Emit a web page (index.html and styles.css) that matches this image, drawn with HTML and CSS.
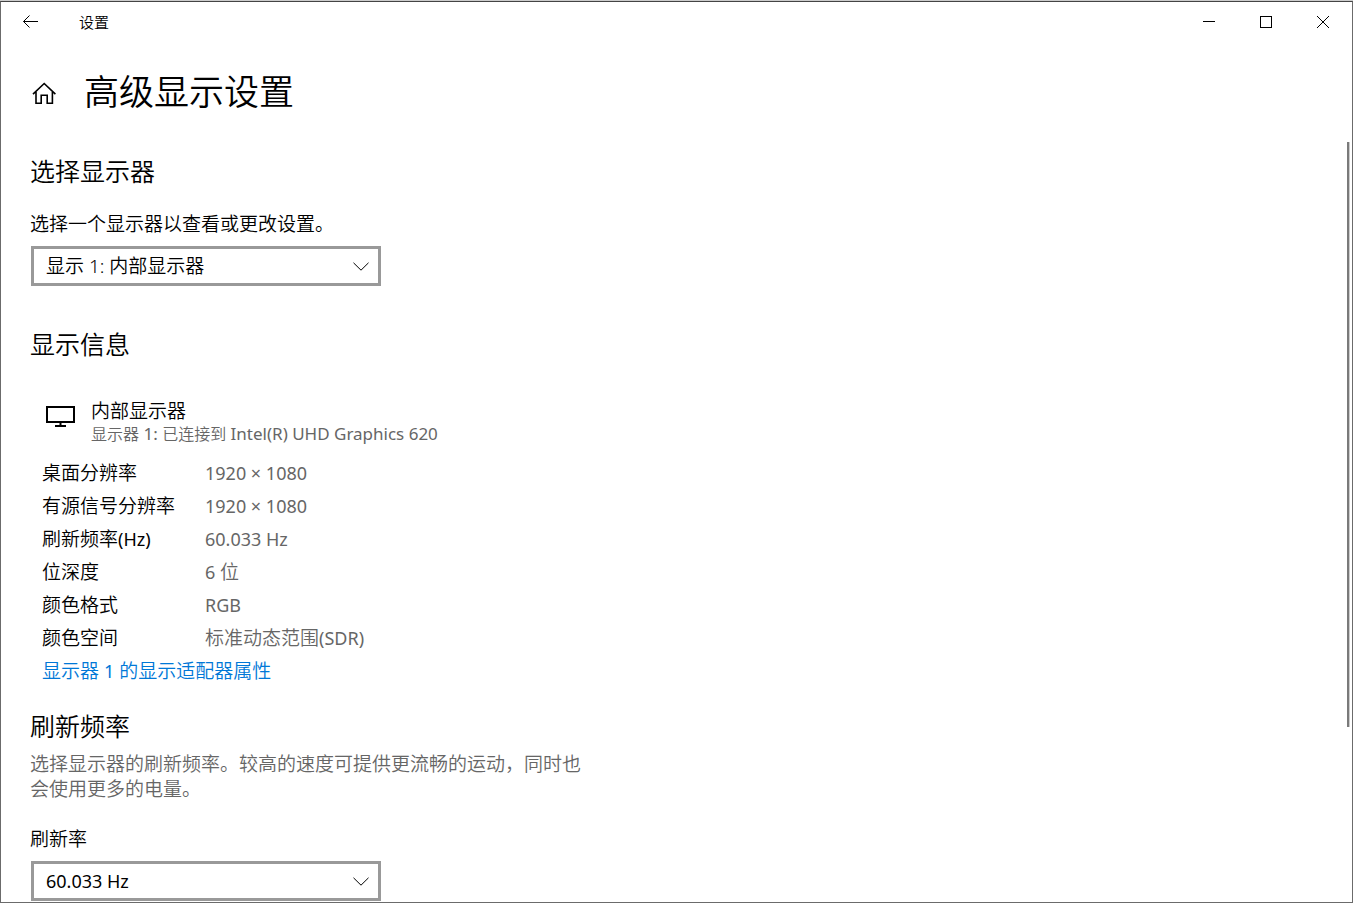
FILE: index.html
```html
<!DOCTYPE html>
<html lang="zh-CN">
<head>
    <meta charset="UTF-8">
    <meta name="viewport" content="width=device-width, initial-scale=1.0">
    <title>设置</title>
    <link rel="stylesheet" href="styles.css">
</head>
<body>
    <div class="window">
        <div class="titlebar">
            <button type="button" class="back" aria-label="返回">
                <svg width="16" height="14" viewBox="0 0 16 14"><path d="M16 6.5H1.5M7.5 .5l-6 6 6 6"/></svg>
            </button>
            <span class="app-name">设置</span>
            <div class="win-btns">
                <button type="button" aria-label="最小化">
                    <svg width="12" height="12" viewBox="0 0 12 12" shape-rendering="crispEdges"><path d="M0 5.5h12"/></svg>
                </button>
                <button type="button" aria-label="最大化">
                    <svg width="12" height="12" viewBox="0 0 12 12" shape-rendering="crispEdges"><path d="M.5 .5h11v11H.5z"/></svg>
                </button>
                <button type="button" aria-label="关闭">
                    <svg width="12" height="12" viewBox="0 0 12 12"><path d="M0 0l12 12M12 0L0 12"/></svg>
                </button>
            </div>
        </div>

        <header class="header">
            <a href="#" class="home" aria-label="主页">
                <svg width="24" height="22" viewBox="0 0 24 22"><path d="M1 12.2L12.2 1.5 23.4 12.2M4 10v11.2h5.2v-8h6v8h5.2V10"/></svg>
            </a>
            <h1>高级显示设置</h1>
        </header>

        <main class="content">
            <section>
                <h2>选择显示器</h2>
                <label for="display" class="label">选择一个显示器以查看或更改设置。</label>
                <div class="select">
                    <select id="display">
                        <option>显示 1: 内部显示器</option>
                    </select>
                    <svg width="16" height="9" viewBox="0 0 16 9"><path d="M.5 .8L8 8.2 15.5 .8"/></svg>
                </div>
            </section>

            <section class="info">
                <h2>显示信息</h2>
                <div class="monitor">
                    <svg width="29" height="22" viewBox="0 0 29 22"><path d="M1 1h27v15H1zM14.5 16v4M9 20h11"/></svg>
                    <div>
                        <p class="monitor-name">内部显示器</p>
                        <p class="monitor-desc"><span class="cjk">显示器</span> 1: <span class="cjk">已连接到</span> Intel(R) UHD Graphics 620</p>
                    </div>
                </div>
                <table class="props">
                    <tr><th scope="row">桌面分辨率</th><td>1920 × 1080</td></tr>
                    <tr><th scope="row">有源信号分辨率</th><td>1920 × 1080</td></tr>
                    <tr><th scope="row">刷新频率<span class="latin">(Hz)</span></th><td>60.033 Hz</td></tr>
                    <tr><th scope="row">位深度</th><td>6 <span class="cjk">位</span></td></tr>
                    <tr><th scope="row">颜色格式</th><td>RGB</td></tr>
                    <tr><th scope="row">颜色空间</th><td><span class="cjk">标准动态范围</span>(SDR)</td></tr>
                </table>
                <a href="#" class="link">显示器 <span class="latin">1</span> 的显示适配器属性</a>
            </section>

            <section class="refresh">
                <h2>刷新频率</h2>
                <p class="desc">选择显示器的刷新频率。较高的速度可提供更流畅的运动，同时也会使用更多的电量。</p>
                <label for="rate" class="label">刷新率</label>
                <div class="select">
                    <select id="rate" class="latin">
                        <option>60.033 Hz</option>
                    </select>
                    <svg width="16" height="9" viewBox="0 0 16 9"><path d="M.5 .8L8 8.2 15.5 .8"/></svg>
                </div>
            </section>
            <div class="scroll-thumb"></div>
        </main>
    </div>
</body>
</html>
```

FILE: styles.css
```css
*{
    margin: 0;
    padding: 0;
    box-sizing: border-box;
}
body{
    padding-top: 1px;
    font-family: "Noto Sans", "Noto Sans CJK SC", sans-serif;
    font-size: 19px;
    font-weight: 350;
    line-height: 24px;
    color: #000;
    background-color: #ccc;
    overflow: hidden;
}
h1,h2,th{
    font-weight: inherit;
}
svg{
    display: block;
    flex: none;
    fill: none;
    stroke: #000;
}
button{
    display: flex;
    align-items: center;
    justify-content: center;
    border: 0;
    background: none;
}
.window{
    display: flex;
    flex-direction: column;
    height: calc(100vh - 1px);
    border: 1px solid #6b6b6b;
    border-top-color: #444;
    background-color: #fff;
    overflow: hidden;
}
.titlebar{
    display: flex;
    flex: none;
    align-items: center;
    height: 40px;
}
.back{
    width: 58px;
    height: 40px;
}
.app-name{
    margin-left: 20px;
    font-size: 15px;
}
.win-btns{
    display: flex;
    margin-left: auto;
    padding-right: 1px;
}
.win-btns button{
    width: 57px;
    height: 40px;
}
.header{
    display: flex;
    flex: none;
    align-items: center;
    gap: 28px;
    height: 100px;
    padding-left: 31px;
}
.home{
    padding-top: 2px;
}
.home svg{
    stroke-width: 1.6;
}
h1{
    font-size: 35px;
    line-height: 48px;
}
h2{
    font-size: 25px;
    line-height: 32px;
}
.content{
    position: relative;
    flex: 1;
    min-height: 0;
    padding: 13px 30px 0 29px;
}
.label{
    display: block;
    margin: 25px 0 10px;
}
.select{
    position: relative;
    max-width: 350px;
    margin-left: 1px;
}
.select select{
    display: block;
    width: 100%;
    height: 40px;
    padding: 0 40px 0 12px;
    border: 3px solid #999;
    border-radius: 0;
    appearance: none;
    background-color: #fff;
    color: #000;
    font-family: inherit;
    font-size: 19px;
    font-weight: inherit;
}
.select svg{
    position: absolute;
    right: 12px;
    top: 16px;
    pointer-events: none;
}
.info{
    margin-top: 42px;
}
.monitor{
    display: flex;
    gap: 16px;
    margin: 39px 0 11px;
    padding-left: 16px;
}
.monitor svg{
    margin-top: 7px;
    stroke-width: 2;
}
.monitor-desc{
    font-size: 17px;
    font-weight: 400;
    line-height: 22px;
    color: #666;
}
.monitor-desc .cjk{
    font-size: 16px;
    font-weight: 350;
}
.props{
    margin-left: 12px;
    border-spacing: 0;
}
.props th{
    width: 163px;
    height: 33px;
    text-align: left;
}
.props td{
    font-size: 18px;
    font-weight: 400;
    color: #666;
}
.props .cjk{
    font-size: 19px;
    font-weight: 350;
}
.latin,
.select .latin{
    font-size: 18px;
    font-weight: 400;
}
.link{
    display: block;
    width: max-content;
    margin-left: 12px;
    line-height: 35px;
    color: #0078d7;
    text-decoration: none;
}
.refresh{
    margin-top: 21px;
}
.desc{
    max-width: 556px;
    margin-top: 10px;
    line-height: 25px;
    color: #666;
}
.scroll-thumb{
    position: absolute;
    right: 2px;
    top: 0;
    width: 3px;
    height: 77%;
    border-right: 1px solid #ccc;
    background-color: #7a7a7a;
}
```
